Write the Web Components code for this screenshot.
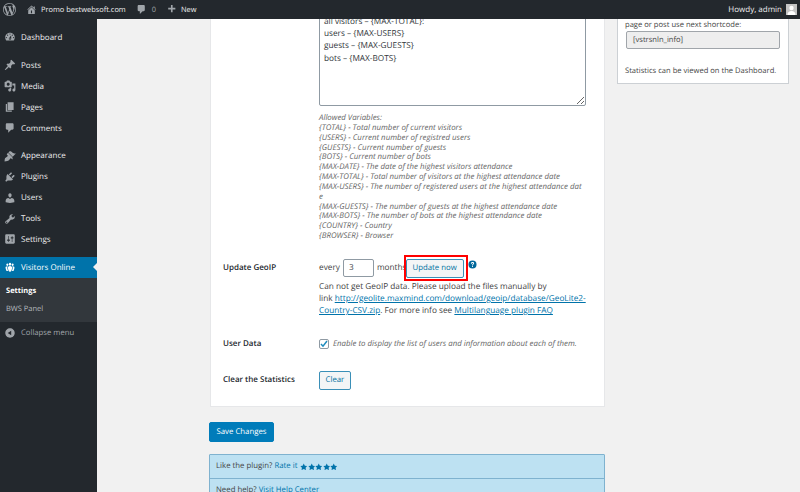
<!DOCTYPE html>
<html>
<head>
<meta charset="utf-8">
<title>Visitors Online</title>
<style>
  html, body { margin: 0; height: 100%; overflow: hidden; background: #f1f1f1; }
  body { font-family: "Open Sans", sans-serif; font-size: 8.25px; color: #444; text-rendering: geometricPrecision; }
</style>
</head>
<body>
<wp-shell>
  <wp-admin-bar slot="bar"></wp-admin-bar>
  <wp-side-menu slot="menu"></wp-side-menu>
  <settings-form></settings-form>
  <info-box slot="aside"></info-box>
</wp-shell>

<script>
const ICONS = {
  wp: 'M20 10c0-5.51-4.49-10-10-10C4.48 0 0 4.49 0 10c0 5.52 4.48 10 10 10 5.51 0 10-4.48 10-10zM7.78 15.37L4.37 6.22c.55-.02 1.17-.08 1.17-.08.5-.06.44-1.13-.06-1.11 0 0-1.45.11-2.37.11-.18 0-.37 0-.58-.01C4.12 2.69 6.87 1.11 10 1.11c2.33 0 4.45.87 6.05 2.34-.68-.11-1.65.39-1.65 1.58 0 .74.45 1.36.9 2.1.35.61.55 1.36.55 2.46 0 1.49-1.4 5-1.4 5l-3.03-8.37c.54-.02.82-.17.82-.17.5-.05.44-1.25-.06-1.22 0 0-1.44.12-2.38.12-.87 0-2.33-.12-2.33-.12-.5-.03-.56 1.2-.06 1.22l.92.08 1.26 3.41zM17.41 10c.24-.64.74-1.87.43-4.25.7 1.29 1.05 2.71 1.05 4.25 0 3.29-1.73 6.24-4.4 7.78.97-2.59 1.94-5.2 2.92-7.78zM6.1 18.09C3.12 16.65 1.11 13.53 1.11 10c0-1.3.23-2.48.72-3.59C3.25 10.3 4.67 14.2 6.1 18.09zm4.03-6.63l2.58 6.98c-.86.29-1.76.45-2.71.45-.79 0-1.57-.11-2.29-.33.81-2.38 1.62-4.74 2.42-7.1z',
  home: 'M16 8.5l1.53 1.53-1.06 1.06L10 4.62l-6.47 6.47-1.06-1.06L10 2.5l4 4v-2h2v4zm-6-2.46l6 5.99V18H4v-6.03zM11 17v-5H9v5h2z',
  comment: 'M5 2h9c1.1 0 2 .9 2 2v7c0 1.1-.9 2-2 2h-2l-5 5v-5H5c-1.1 0-2-.9-2-2V4c0-1.1.9-2 2-2z',
  plus: 'M17 7v3h-5v5H9v-5H4V7h5V2h3v5h5z',
  dashboard: 'M3.76 16h12.48c1.1-1.37 1.76-3.11 1.76-5 0-4.42-3.58-8-8-8s-8 3.58-8 8c0 1.89.66 3.63 1.76 5zM10 4c.55 0 1 .45 1 1s-.45 1-1 1-1-.45-1-1 .45-1 1-1zM6 6c.55 0 1 .45 1 1s-.45 1-1 1-1-.45-1-1 .45-1 1-1zm8 0c.55 0 1 .45 1 1s-.45 1-1 1-1-.45-1-1 .45-1 1-1zm-5.37 5.55L12 7v6c0 1.1-.9 2-2 2s-2-.9-2-2c0-.57.24-1.08.63-1.45zM4 10c.55 0 1 .45 1 1s-.45 1-1 1-1-.45-1-1 .45-1 1-1zm12 0c.55 0 1 .45 1 1s-.45 1-1 1-1-.45-1-1 .45-1 1-1zm-5 3c0-.55-.45-1-1-1s-1 .45-1 1 .45 1 1 1 1-.45 1-1z',
  pin: 'M10.44 3.02l1.82-1.82 6.36 6.35-1.83 1.82c-1.05-.68-2.48-.57-3.41.36l-.75.75c-.92.93-1.04 2.35-.35 3.41l-1.83 1.82-2.41-2.41-2.8 2.79c-.42.42-3.38 2.71-3.8 2.29s1.86-3.39 2.28-3.81l2.79-2.79L4.1 9.36l1.83-1.82c1.05.69 2.48.57 3.4-.36l.75-.75c.93-.92 1.05-2.35.36-3.41z',
  media: 'M13 11V4c0-.55-.45-1-1-1h-1.67L9 1H5L3.67 3H2c-.55 0-1 .45-1 1v7c0 .55.45 1 1 1h10c.55 0 1-.45 1-1zM7 4.5c1.38 0 2.5 1.12 2.5 2.5S8.38 9.5 7 9.5 4.5 8.38 4.5 7 5.62 4.5 7 4.5zM14 6h5v10.5c0 1.38-1.12 2.5-2.5 2.5S14 17.88 14 16.5s1.12-2.5 2.5-2.5c.17 0 .34.02.5.05V9h-3V6zm-4 8.05V13h2v3.5c0 1.38-1.12 2.5-2.5 2.5S7 17.88 7 16.5 8.12 14 9.5 14c.17 0 .34.02.5.05z',
  pages: 'M6 15V2h10v13H6zm-1 1h8v2H3V5h2v11z',
  brush: 'M14.48 11.06L7.41 3.99l1.5-1.5c.5-.56 2.3-.47 3.51.32 1.21.8 1.43 1.28 2.91 2.1 1.18.64 2.45 1.26 4.45.85zm-.71.71L6.7 4.7 4.93 6.47c-.39.39-.39 1.02 0 1.41l1.06 1.06c.39.39.39 1.03 0 1.42-.6.6-1.43 1.11-2.21 1.69-.35.26-.7.53-1.01.84C1.43 13.23 1 15.6 1 19c3.4 0 5.77-.43 7.11-1.77.31-.31.58-.66.84-1.01.58-.78 1.09-1.61 1.69-2.21.39-.39 1.03-.39 1.42 0l1.06 1.06c.39.39 1.02.39 1.41 0z',
  plugin: 'M13.11 4.36L9.87 7.6 8 5.73l3.24-3.24c.35-.34 1.05-.2 1.56.32.52.51.66 1.21.31 1.55zm-8 1.77l.91-1.12 9.01 9.01-1.19.84c-.71.71-2.63 1.16-3.82 1.16H6.14L4.9 17.26c-.59.59-1.54.59-2.12 0-.59-.58-.59-1.53 0-2.12l1.24-1.24v-3.88c0-1.13.4-3.19 1.09-3.89zm7.26 3.97l3.24-3.24c.34-.35 1.04-.21 1.55.31.52.51.66 1.21.31 1.55l-3.24 3.25z',
  users: 'M10 9.25c-2.27 0-2.73-3.44-2.73-3.44C7 4.02 7.82 2 9.97 2c2.16 0 2.98 2.02 2.71 3.81 0 0-.41 3.44-2.68 3.44zm0 2.57L12.72 10c2.39 0 4.52 2.33 4.52 4.53v2.49s-3.65 1.13-7.24 1.13c-3.65 0-7.24-1.13-7.24-1.13v-2.49c0-2.25 1.94-4.48 4.47-4.48z',
  tools: 'M16.68 9.77c-1.34 1.34-3.3 1.67-4.95.99l-5.41 6.52c-.99.99-2.59.99-3.58 0s-.99-2.59 0-3.57l6.52-5.42c-.68-1.65-.35-3.61.99-4.95 1.28-1.28 3.12-1.62 4.72-1.06l-2.89 2.89 2.82 2.82 2.86-2.87c.53 1.58.18 3.39-1.08 4.65zM3.81 16.21c.4.39 1.04.39 1.43 0 .4-.4.4-1.04 0-1.43-.39-.4-1.03-.4-1.43 0-.39.39-.39 1.03 0 1.43z',
  settings: 'M18 16V4c0-1.1-.9-2-2-2H4c-1.1 0-2 .9-2 2v12c0 1.1.9 2 2 2h12c1.1 0 2-.9 2-2zM8 11h1c.55 0 1 .45 1 1s-.45 1-1 1H8v1.5c0 .28-.22.5-.5.5s-.5-.22-.5-.5V13H6c-.55 0-1-.45-1-1s.45-1 1-1h1V5.5c0-.28.22-.5.5-.5s.5.22.5.5V11zm5-2h-1c-.55 0-1-.45-1-1s.45-1 1-1h1V5.5c0-.28.22-.5.5-.5s.5.22.5.5V7h1c.55 0 1 .45 1 1s-.45 1-1 1h-1v5.5c0 .28-.22.5-.5.5s-.5-.22-.5-.5V9z',
  groups: 'M8.03 4.46c-.29 1.28.55 3.46 1.97 3.46 1.41 0 2.25-2.18 1.96-3.46-.22-.98-1.08-1.63-1.96-1.63-.89 0-1.74.65-1.97 1.63zm-4.13.9c-.25 1.08.47 2.93 1.67 2.93s1.92-1.85 1.67-2.93c-.19-.83-.92-1.39-1.67-1.39s-1.48.56-1.67 1.39zm8.86 0c-.25 1.08.47 2.93 1.66 2.93 1.2 0 1.92-1.85 1.67-2.93-.19-.83-.92-1.39-1.67-1.39-.74 0-1.47.56-1.66 1.39zm-.59 11.43l1.25-4.3C14.2 10 12.71 8.47 10 8.47c-2.72 0-4.21 1.53-3.44 4.02l1.26 4.3C8.05 17.51 9 18 10 18c.98 0 1.94-.49 2.17-1.21zm-6.1-7.63c-.49.67-.96 1.83-.42 3.59l1.12 3.79c-.34.2-.77.31-1.2.31-.85 0-1.65-.41-1.85-1.03l-1.07-3.65c-.65-2.11.61-3.4 2.92-3.4.27 0 .54.02.79.06-.1.1-.2.22-.29.33zm8.35-.39c2.31 0 3.58 1.29 2.92 3.4l-1.07 3.65c-.2.62-1 1.03-1.85 1.03-.43 0-.86-.11-1.2-.31l1.11-3.77c.55-1.78.08-2.94-.42-3.61-.08-.11-.18-.23-.28-.33.25-.04.51-.06.79-.06z',
  collapse: 'M10 2.16c4.33 0 7.84 3.51 7.84 7.84s-3.51 7.84-7.84 7.84S2.16 14.33 2.16 10 5.71 2.16 10 2.16zm2 11.72V6.12L6.18 9.97z',
  star: 'M10 1l3 6 6 .75-4.12 4.62L16 19l-6-3-6 3 1.13-6.63L1 7.75 7 7z',
  help: 'M10 1a9 9 0 1 0 0 18 9 9 0 0 0 0-18zm1 14.5H9v-2h2zm2.3-6.6c-.4.6-1 1-1.4 1.3-.6.4-.9.7-.9 1.8H9c0-1.9.8-2.5 1.6-3.1.5-.4.9-.7.9-1.3 0-.7-.6-1.1-1.5-1.1-1 0-1.6.6-1.7 1.6H6.4C6.5 6 7.9 4.6 10 4.6c2.2 0 3.5 1.1 3.5 2.8 0 .6-.1 1.1-.2 1.5z'
};
const icon = (name, size, color) =>
  `<svg width="${size}" height="${size}" viewBox="0 0 20 20" fill="${color}" aria-hidden="true"><path fill-rule="evenodd" d="${ICONS[name]}"/></svg>`;

class WpShell extends HTMLElement {
  constructor() {
    super();
    this.attachShadow({mode: 'open'}).innerHTML = `
      <style>
        :host { display: block; position: relative; height: 492px; overflow: hidden; }
        .bar { position: absolute; left: 0; top: 0; right: 0; z-index: 5; }
        .layout { display: flex; height: 100%; }
        .side { flex: 0 0 97px; background: #23282d; padding-top: 27px; box-sizing: border-box; }
        .content { flex: 1; display: flex; align-items: flex-start; gap: 12px; padding-left: 112px; margin-top: -20px; }
        .col { flex: 0 0 396px; }
        .aside { flex: 0 0 172px; }
      </style>
      <div class="bar"><slot name="bar"></slot></div>
      <div class="layout">
        <div class="side"><slot name="menu"></slot></div>
        <div class="content">
          <div class="col"><slot></slot></div>
          <div class="aside"><slot name="aside"></slot></div>
        </div>
      </div>`;
  }
}

class WpAdminBar extends HTMLElement {
  constructor() {
    super();
    this.attachShadow({mode: 'open'}).innerHTML = `
      <style>
        :host { display: flex; align-items: center; height: 19px; background: #23282d; color: #eee; font-size: 7.45px; }
        .it { display: flex; align-items: center; white-space: nowrap; }
        .count { color: #a0a5aa; }
        .user { margin-left: auto; display: flex; align-items: center; gap: 4px; margin-right: 3px; font-size: 8px; }
        .avatar { width: 11px; height: 11px; display: block; }
      </style>
      <span class="it" style="margin-left:3px">${icon('wp', 13, '#a0a5aa')}</span>
      <span class="it" style="margin-left:10px;gap:4px">${icon('home', 11, '#a0a5aa')}Promo bestwebsoft.com</span>
      <span class="it" style="margin-left:10px;gap:5px">${icon('comment', 11, '#a0a5aa')}<span class="count">0</span></span>
      <span class="it" style="margin-left:10px;gap:4px">${icon('plus', 11, '#a0a5aa')}New</span>
      <span class="user">Howdy, admin
        <svg class="avatar" viewBox="0 0 11 11"><rect width="11" height="11" fill="#c4c4c4"/><circle cx="5.5" cy="4" r="2.2" fill="#fff"/><path d="M1.5 11c0-3 1.8-4 4-4s4 1 4 4z" fill="#fff"/></svg>
      </span>`;
  }
}

class MenuItem extends HTMLElement {
  constructor() {
    super();
    this.attachShadow({mode: 'open'});
  }
  connectedCallback() {
    const current = this.hasAttribute('current');
    this.shadowRoot.innerHTML = `
      <style>
        :host { display: block; position: relative; }
        .row { display: flex; align-items: center; height: 20.9px; padding-left: 4px; gap: 5px; color: #eee; font-size: 8px; white-space: nowrap; }
        :host([current]) .row { background: #0073aa; color: #fff; }
        :host([muted]) .row { color: #a0a5aa; font-size: 7.7px; }
        svg { flex: none; width: 12px; height: 12px; }
        .arrow { position: absolute; right: 0; top: 6.5px; border: 4px solid transparent; border-right: 4px solid #f1f1f1; border-left: 0; }
      </style>
      <div class="row">${icon(this.getAttribute('icon'), 12, current ? '#fff' : '#a0a5aa')}<slot></slot></div>
      ${current ? '<span class="arrow"></span>' : ''}`;
  }
}

class WpSideMenu extends HTMLElement {
  constructor() {
    super();
    this.attachShadow({mode: 'open'}).innerHTML = `
      <style>
        :host { display: block; }
        .gap { height: 7px; }
        .sub { background: #32373c; padding: 4.5px 0 4px 6px; color: #b4b9be; font-size: 7.5px; }
        .sub div { height: 18px; line-height: 18px; }
        .sub .on { color: #fff; font-weight: 700; }
      </style>
      <menu-item icon="dashboard">Dashboard</menu-item>
      <div class="gap"></div>
      <menu-item icon="pin">Posts</menu-item>
      <menu-item icon="media">Media</menu-item>
      <menu-item icon="pages">Pages</menu-item>
      <menu-item icon="comment">Comments</menu-item>
      <div class="gap"></div>
      <menu-item icon="brush">Appearance</menu-item>
      <menu-item icon="plugin">Plugins</menu-item>
      <menu-item icon="users">Users</menu-item>
      <menu-item icon="tools">Tools</menu-item>
      <menu-item icon="settings">Settings</menu-item>
      <div class="gap"></div>
      <menu-item icon="groups" current>Visitors Online</menu-item>
      <div class="sub"><div class="on">Settings</div><div>BWS Panel</div></div>
      <menu-item icon="collapse" muted>Collapse menu</menu-item>`;
  }
}

class WpButton extends HTMLElement {
  constructor() {
    super();
    this.attachShadow({mode: 'open'}).innerHTML = `
      <style>
        :host { display: inline-flex; align-items: center; justify-content: center; box-sizing: border-box; height: 19px; padding: 0 6px; font-size: 7.8px; color: #0071a1; background: #f3f5f6; border: 1px solid #3a8fb7; border-radius: 2px; white-space: nowrap; }
        :host([primary]) { height: 20px; padding: 0 6.5px; background: #007cba; border-color: #007cba; color: #fff; }
        :host([small]) { padding: 0 5.5px; }
      </style>
      <slot></slot>`;
  }
}

class FormRow extends HTMLElement {
  constructor() {
    super();
    this.attachShadow({mode: 'open'}).innerHTML = `
      <style>
        :host { display: grid; grid-template-columns: 96px 1fr; }
        .label { font-weight: 600; color: #23282d; font-size: 8px; line-height: 12px; padding-top: var(--label-top, 0); }
      </style>
      <div class="label"><slot name="label"></slot></div>
      <div><slot></slot></div>`;
  }
}

class SettingsForm extends HTMLElement {
  constructor() {
    super();
    const vars = [
      'Allowed Variables:',
      '{TOTAL} - Total number of current visitors',
      '{USERS} - Current number of registred users',
      '{GUESTS} - Current number of guests',
      '{BOTS} - Current number of bots',
      '{MAX-DATE} - The date of the highest visitors attendance',
      '{MAX-TOTAL} - Total number of visitors at the highest attendance date',
      '{MAX-USERS} - The number of registered users at the highest attendance dat',
      'e',
      '{MAX-GUESTS} - The number of guests at the highest attendance date',
      '{MAX-BOTS} - The number of bots at the highest attendance date',
      '{COUNTRY} - Country',
      '{BROWSER} - Browser'
    ].map(l => `<div>${l}</div>`).join('');
    this.attachShadow({mode: 'open'}).innerHTML = `
      <style>
        :host { display: block; }
        .card { background: #fff; border: 1px solid #e6e7e9; margin-left: 1px; padding: 0 0 16px 12px; }
        .area { box-sizing: border-box; width: 267px; height: 115px; margin: 10px 0 0; padding: 24px 4px 0; border: 1px solid #8f9aa3; border-radius: 2px; line-height: 12.2px; color: #32373c; resize: both; overflow: hidden; white-space: nowrap; }
        .desc { margin-top: 8px; font-style: italic; font-size: 7.85px; line-height: 9.85px; color: #666; white-space: nowrap; }
        .geo { margin-top: 17px; --label-top: 3px; }
        .line { display: flex; align-items: flex-start; white-space: nowrap; }
        .num { box-sizing: border-box; width: 31px; height: 18px; margin: 0 3px 0 3px; padding-left: 5px; border: 1px solid #8f9aa3; border-radius: 2px; line-height: 16px; color: #32373c; }
        .mark { display: inline-flex; border: 2px solid #f00; padding: 2px 2px 1px 0; margin: -4px 0 0 -3px; }
        .q { margin: 1px 0 0 0; line-height: 0; }
        .info { margin-top: 0; line-height: 12px; white-space: nowrap; }
        a { color: #0073aa; text-decoration: underline; }
        .user { margin-top: 21px; }
        .check { display: flex; align-items: center; gap: 4px; font-style: italic; font-size: 7.85px; color: #666; height: 12px; }
        .box { box-sizing: border-box; width: 10px; height: 10px; border: 1px solid #8f9aa3; border-radius: 2px; display: flex; align-items: center; justify-content: center; }
        .clear { margin-top: 24px; }
        .clear wp-button { margin-top: -3px; }
        .save { margin-top: 15px; }
        .note { margin-top: 12px; background: #bde1f2; border: 1px solid #7fb2cf; border-radius: 1px; color: #444; font-size: 7.8px; }
        .note div { height: 23px; padding-left: 6px; display: flex; align-items: center; gap: 2px; }
        .note div + div { border-top: 1px solid #7fb2cf; }
        .stars { display: inline-flex; margin-left: 1px; }
      </style>
      <div class="card">
        <form-row>
          <span slot="label"></span>
          <div class="area">all visitors – {MAX-TOTAL}:<br>users – {MAX-USERS}<br>guests – {MAX-GUESTS}<br>bots – {MAX-BOTS}</div>
          <div class="desc">${vars}</div>
        </form-row>
        <form-row class="geo">
          <span slot="label">Update GeoIP</span>
          <div class="line"><span style="line-height:18px">every</span><span class="num">3</span><span style="line-height:18px">months</span>
            <span class="mark"><wp-button>Update now</wp-button></span>
            <span class="q">${icon('help', 9, '#00689b')}</span></div>
          <div class="info">Can not get GeoIP data. Please upload the files manually by<br>link <a>http://geolite.maxmind.com/download/geoip/database/GeoLite2-</a><br><a>Country-CSV.zip</a>. For more info see <a>Multilanguage plugin FAQ</a></div>
        </form-row>
        <form-row class="user">
          <span slot="label">User Data</span>
          <div class="check"><span class="box"><svg width="8" height="8" viewBox="0 0 8 8"><path d="M1 4l2 2.2L7 1" fill="none" stroke="#1e8cbe" stroke-width="1.5"/></svg></span>Enable to display the list of users and information about each of them.</div>
        </form-row>
        <form-row class="clear">
          <span slot="label">Clear the Statistics</span>
          <wp-button small>Clear</wp-button>
        </form-row>
      </div>
      <div class="save"><wp-button primary>Save Changes</wp-button></div>
      <div class="note">
        <div>Like the plugin? <a style="text-decoration:none">Rate it</a><span class="stars">${icon('star', 7.5, '#0073aa').repeat(5)}</span></div>
        <div>Need help? <a>Visit Help Center</a></div>
      </div>`;
  }
}

class InfoBox extends HTMLElement {
  constructor() {
    super();
    this.attachShadow({mode: 'open'}).innerHTML = `
      <style>
        :host { display: block; box-sizing: border-box; background: #fff; border: 1px solid #ccd0d4; padding: 38px 7px 6px; font-size: 7.6px; line-height: 12px; }
        .code { box-sizing: border-box; width: 154px; height: 18px; margin: 0 0 16px 1px; padding-left: 6px; background: #eee; border: 1px solid #a0a5aa; border-radius: 2px; line-height: 16px; color: #444; }
      </style>
      <div>page or post use next shortcode:</div>
      <div class="code">[vstrsnln_info]</div>
      <div>Statistics can be viewed on the Dashboard.</div>`;
  }
}

customElements.define('wp-shell', WpShell);
customElements.define('wp-admin-bar', WpAdminBar);
customElements.define('menu-item', MenuItem);
customElements.define('wp-side-menu', WpSideMenu);
customElements.define('wp-button', WpButton);
customElements.define('form-row', FormRow);
customElements.define('settings-form', SettingsForm);
customElements.define('info-box', InfoBox);
</script>
</body>
</html>
